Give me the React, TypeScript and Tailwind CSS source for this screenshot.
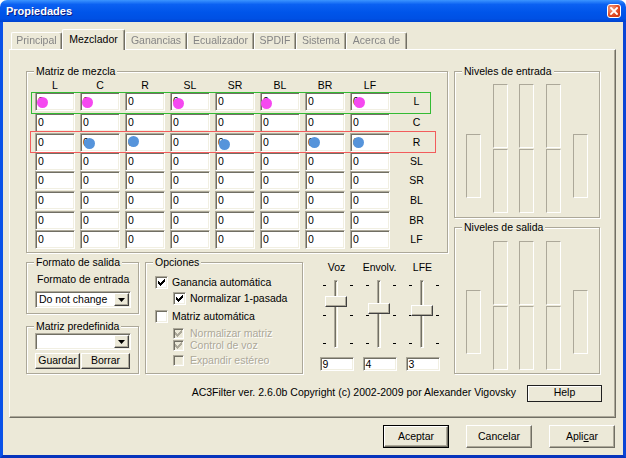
import React from "react";

const sunken =
  "border border-t-[#ACA899] border-l-[#ACA899] border-b-white border-r-white shadow-[inset_1px_1px_0_#716F64,inset_-1px_-1px_0_#F1EFE2]";
const raised =
  "border border-t-white border-l-white border-b-[#404040] border-r-[#404040] shadow-[inset_-1px_-1px_0_#ACA899] bg-[#ECE9D8]";
const raisedSoft =
  "border border-t-white border-l-white border-b-[#716F64] border-r-[#716F64] shadow-[inset_-1px_-1px_0_#ACA899] bg-[#ECE9D8]";

const tabs = [
  { label: "Principal", w: "w-[51px]" },
  { label: "Mezclador", w: "w-[63px]", active: true },
  { label: "Ganancias", w: "w-[62px]" },
  { label: "Ecualizador", w: "w-[67px]" },
  { label: "SPDIF", w: "w-[42px]" },
  { label: "Sistema", w: "w-[50px]" },
  { label: "Acerca de", w: "w-[61px]" },
];

const channels = ["L", "C", "R", "SL", "SR", "BL", "BR", "LF"];
// spacing above each matrix row (the rows are not evenly spaced in the dialog)
const rowGap = ["", "mt-[2px]", "mt-[1px]", "", "", "mt-[1px]", "mt-[1px]", ""];

// dots drawn over the matrix cells: "row-col" -> position inside the cell
const pink = "bg-[#F548F0]";
const blue = "bg-[#5694DB]";
const dots: Record<string, string> = {
  "0-0": `${pink} left-[1px] top-[4px]`,
  "0-1": `${pink} left-[1px] top-[4px]`,
  "0-3": `${pink} left-[2px] top-[5px]`,
  "0-5": `${pink} left-[0px] top-[5px]`,
  "0-7": `${pink} left-[3px] top-[4px]`,
  "2-1": `${blue} left-[3px] top-[4px]`,
  "2-2": `${blue} left-[2px] top-[2px]`,
  "2-4": `${blue} left-[3px] top-[5px]`,
  "2-6": `${blue} left-[3px] top-[3px]`,
  "2-7": `${blue} left-[2px] top-[3px]`,
};

const checkPixels = [
  [6, 0], [5, 1], [6, 1], [0, 2], [4, 2], [5, 2], [6, 2],
  [0, 3], [1, 3], [3, 3], [4, 3], [5, 3],
  [0, 4], [1, 4], [2, 4], [3, 4], [4, 4],
  [1, 5], [2, 5], [3, 5], [2, 6],
];

function Group({ label, className = "", children }: { label: string; className?: string; children?: React.ReactNode }) {
  return (
    <div className={`relative border border-[#ACA899] shadow-[inset_1px_1px_0_#fff,1px_1px_0_#fff] ${className}`}>
      <span className="absolute left-[7px] top-[-7px] px-[2px] bg-[#ECE9D8] leading-[12px] whitespace-nowrap">{label}</span>
      {children}
    </div>
  );
}

function Meter({ className = "" }: { className?: string }) {
  return <div className={`w-[15px] h-[64px] border border-t-[#ACA899] border-l-[#ACA899] border-b-white border-r-white ${className}`} />;
}

function Levels({ label, pad, side, className = "" }: { label: string; pad: string; side: string; className?: string }) {
  return (
    <Group label={label} className={`w-[146px] h-[147px] ${className}`}>
      <div className={`flex gap-[11.7px] pl-[11px] ${pad}`}>
        <Meter className={side} />
        {[0, 1, 2].map((i) => (
          <div key={i} className="flex flex-col gap-[1px]">
            <Meter />
            <Meter />
          </div>
        ))}
        <Meter className={side} />
      </div>
    </Group>
  );
}

function Check({ checked, disabled, small }: { checked?: boolean; disabled?: boolean; small?: boolean }) {
  return (
    <div
      className={`${small ? "w-[11px] h-[11px]" : "w-[13px] h-[13px]"} ${sunken} ${
        disabled ? "bg-[#ECE9D8]" : "bg-white"
      } flex items-center justify-center`}
    >
      {checked && (
        <svg width="7" height="7" viewBox="0 0 7 7" shapeRendering="crispEdges">
          {checkPixels.map(([x, y]) => (
            <rect key={`${x}-${y}`} x={x} y={y} width="1" height="1" fill={disabled ? "#ACA899" : "#000"} />
          ))}
        </svg>
      )}
    </div>
  );
}

function Option({ label, checked, disabled, small, className = "" }: { label: string; checked?: boolean; disabled?: boolean; small?: boolean; className?: string }) {
  return (
    <div className={`flex items-center ${small ? "h-[11px]" : "h-[13px]"} ${className}`}>
      <div className="w-[17px] shrink-0">
        <Check checked={checked} disabled={disabled} small={small} />
      </div>
      <span className={`leading-[13px] whitespace-nowrap ${disabled ? "text-[#ACA899] [text-shadow:1px_1px_0_#fff]" : ""}`}>{label}</span>
    </div>
  );
}

function Combo({ text, className = "" }: { text?: string; className?: string }) {
  return (
    <div className={`w-[96px] ${sunken} bg-white p-[1px] flex ${className}`}>
      <div className="flex-1 pl-[2px] flex items-center overflow-hidden whitespace-nowrap">{text}</div>
      <div className={`w-[15px] h-full ${raised} flex items-center justify-center`}>
        <svg width="7" height="4" viewBox="0 0 7 4">
          <path d="M0 0h7L3.5 4z" fill="#000" />
        </svg>
      </div>
    </div>
  );
}

function Slider({ label, value, thumb }: { label: string; value: string; thumb: string }) {
  return (
    <div className="w-[43px] flex flex-col items-center">
      <div className="-mt-[1px] leading-[12px]">{label}</div>
      <div className="relative w-full h-[74px] mt-[5px]">
        <div className="absolute left-[19px] top-[2px] w-[4px] h-[68px] border border-t-[#ACA899] border-l-[#ACA899] border-b-white border-r-white shadow-[inset_1px_1px_0_#716F64]" />
        {["top-[7px]", "top-[37px]", "top-[65px]"].map((t) => (
          <React.Fragment key={t}>
            <div className={`absolute left-[8px] w-[3px] h-[1px] bg-black ${t}`} />
            <div className={`absolute left-[35px] w-[3px] h-[1px] bg-black ${t}`} />
          </React.Fragment>
        ))}
        <div className={`absolute left-[10px] w-[22px] h-[11px] ${raised} ${thumb}`} />
      </div>
      <div className={`mt-[5px] w-[34px] h-[14px] ${sunken} bg-white pl-[2px] leading-[12px]`}>{value}</div>
    </div>
  );
}

function MatrixGroup() {
  return (
    <Group label="Matriz de mezcla" className="h-[182px] pl-[8px] pt-[7px]">
      <div className="grid grid-cols-[repeat(8,40px)_43px] gap-x-[5px] h-[13px] leading-[13px]">
        {channels.map((c) => (
          <div key={c} className="text-center">{c}</div>
        ))}
        <div />
      </div>
      <div className="flex flex-col">
        {channels.map((row, r) => (
          <div key={row} className={`grid grid-cols-[repeat(8,40px)_43px] gap-x-[5px] ${rowGap[r]}`}>
            {channels.map((col, c) => {
              const dot = dots[`${r}-${c}`];
              return (
                <div key={col} className={`relative h-[19px] ${sunken} bg-white pl-[2px] leading-[17px]`}>
                  0
                  {dot && <div className={`absolute w-[11px] h-[11px] rounded-full ${dot}`} />}
                </div>
              );
            })}
            <div className="text-center leading-[19px]">{row}</div>
          </div>
        ))}
      </div>
      {/* highlight frames */}
      <div className="absolute z-10 left-[4px] top-[20px] w-[400px] h-[22px] border border-[#33BB33] pointer-events-none" />
      <div className="absolute z-10 left-[3px] top-[59px] w-[406px] h-[22px] border border-[#F25C5C] pointer-events-none" />
    </Group>
  );
}

export default function App() {
  return (
    <div className="w-[626px] h-[458px] flex flex-col bg-white font-['Liberation_Sans',Arial,sans-serif] text-[10.5px] text-black select-none">
      {/* Title bar */}
      <div className="relative h-[22px] shrink-0 rounded-t-[7px] bg-[linear-gradient(180deg,#3C95FF_0%,#0B61F2_20%,#0055EA_55%,#0050E4_85%,#0043CF_100%)] flex items-center">
        <span className="pl-[6px] text-white font-bold text-[11px] [text-shadow:1px_1px_0_#0A1A80]">Propiedades</span>
        <div className="absolute right-[5px] top-[4px] w-[14px] h-[14px] rounded-[3px] border border-white bg-[radial-gradient(circle_at_30%_30%,#F4A184,#E0461F_60%,#C0330E)] flex items-center justify-center">
          <svg width="8" height="8" viewBox="0 0 8 8">
            <path d="M1 1L7 7M7 1L1 7" stroke="#fff" strokeWidth="1.8" strokeLinecap="square" />
          </svg>
        </div>
      </div>

      {/* Body */}
      <div className="flex-1 flex flex-col bg-[#ECE9D8] border-l-[3px] border-r-[3px] border-b-[3px] border-l-[#0A52E8] border-r-[#0A45D6] border-b-[#0634BC] pl-[6px] pt-[7px]">
        {/* Tabs */}
        <div className="relative z-10 flex items-end h-[21px] -mb-[1px] pl-[2px]">
          {tabs.map((t) =>
            t.active ? (
              <div
                key={t.label}
                className={`${t.w} h-[21px] bg-[#ECE9D8] border-t border-l border-r border-t-white border-l-white border-r-[#716F64] rounded-t-[2px] shadow-[inset_-1px_0_0_#ACA899] flex items-center justify-center`}
              >
                {t.label}
              </div>
            ) : (
              <div
                key={t.label}
                className={`${t.w} h-[17px] mb-[1px] border-t border-l border-r border-t-white border-l-white border-r-[#716F64] rounded-t-[2px] shadow-[inset_-1px_0_0_#ACA899] flex items-center justify-center`}
              >
                <span className="text-[#858585] blur-[0.5px]">{t.label}</span>
              </div>
            )
          )}
        </div>

        {/* Tab panel */}
        <div className="w-[607px] h-[369px] flex flex-col border border-t-white border-l-white border-r-[#716F64] border-b-[#716F64] shadow-[inset_-1px_-1px_0_#ACA899] pl-[16px] pt-[21px]">
          <div className="flex gap-[6px]">
            <div className="w-[422px] flex flex-col">
              <MatrixGroup />

              <div className="flex mt-[9px] h-[112px]">
                <div className="w-[113px] flex flex-col">
                  <Group label="Formato de salida" className="h-[52px] pl-[8px] pt-[10px]">
                    <div className="pl-[2px] leading-[12px] whitespace-nowrap">Formato de entrada</div>
                    <Combo text="Do not change" className="h-[17px] mt-[6px]" />
                  </Group>
                  <Group label="Matriz predefinida" className="h-[48px] mt-[12px] pl-[8px] pt-[6px]">
                    <Combo className="h-[17px]" />
                    <div className="flex gap-[1px] mt-[3px]">
                      <div className={`w-[45px] h-[16px] ${raised} flex items-center justify-center`}>Guardar</div>
                      <div className={`w-[49px] h-[16px] ${raised} flex items-center justify-center`}>Borrar</div>
                    </div>
                  </Group>
                </div>

                <Group label="Opciones" className="w-[158px] h-[112px] ml-[6px] pl-[9px] pt-[13px]">
                  <Option label="Ganancia automática" checked />
                  <Option label="Normalizar 1-pasada" checked className="mt-[3px] pl-[18px]" />
                  <Option label="Matriz automática" className="mt-[5px]" />
                  <Option label="Normalizar matriz" checked disabled small className="mt-[5px] pl-[18px]" />
                  <Option label="Control de voz" checked disabled small className="mt-[1px] pl-[18px]" />
                  <Option label="Expandir estéreo" disabled small className="mt-[4px] pl-[18px]" />
                </Group>

                <div className="flex ml-[12px]">
                  <Slider label="Voz" value="9" thumb="top-[18px]" />
                  <Slider label="Envolv." value="4" thumb="top-[25px]" />
                  <Slider label="LFE" value="3" thumb="top-[27px]" />
                </div>
              </div>
            </div>

            <div className="w-[146px] flex flex-col">
              <Levels label="Niveles de entrada" pad="pt-[12px]" side="mt-[50px]" />
              <Levels label="Niveles de salida" pad="pt-[13px]" side="mt-[49px]" className="mt-[9px]" />
            </div>
          </div>

          <div className="h-[20px] mt-[9px] flex items-center justify-end pr-[13px]">
            <span className="whitespace-nowrap">AC3Filter ver. 2.6.0b Copyright (c) 2002-2009 por Alexander Vigovsky</span>
            <div className="ml-[11px] w-[75px] h-[17px] border border-[#202020] shadow-[inset_1px_1px_0_#fff] flex items-center justify-center">Help</div>
          </div>
        </div>

        {/* Dialog buttons */}
        <div className="w-[607px] flex justify-end gap-[17px] mt-[7px] pr-[1px]">
          <div className="w-[66px] h-[23px] border border-black flex">
            <div className={`flex-1 ${raisedSoft} flex items-center justify-center`}>Aceptar</div>
          </div>
          <div className={`w-[66px] h-[23px] ${raisedSoft} flex items-center justify-center`}>Cancelar</div>
          <div className={`w-[66px] h-[23px] ${raisedSoft} flex items-center justify-center`}>
            <span>
              Apli<u className="underline-offset-[1px]">c</u>ar
            </span>
          </div>
        </div>
      </div>
    </div>
  );
}
